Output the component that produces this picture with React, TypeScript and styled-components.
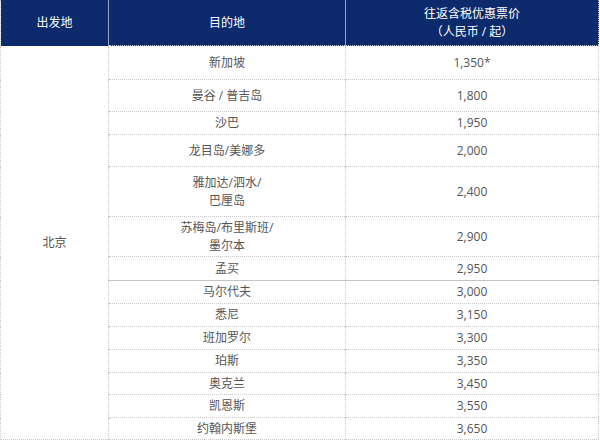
import { createGlobalStyle } from "styled-components";
import styled from "styled-components";

const GlobalStyle = createGlobalStyle`
  html, body {
    margin: 0;
    padding: 0;
    background: #fff;
  }
  body {
    font-family: "Open Sans", "Noto Sans CJK SC", sans-serif;
  }
`;

const rows = [
  { dest: ["新加坡"], price: "1,350*", h: 34 },
  { dest: ["曼谷 / 普吉岛"], price: "1,800", h: 32 },
  { dest: ["沙巴"], price: "1,950", h: 23 },
  { dest: ["龙目岛/美娜多"], price: "2,000", h: 32 },
  { dest: ["雅加达/泗水/", "巴厘岛"], price: "2,400", h: 50 },
  { dest: ["苏梅岛/布里斯班/", "墨尔本"], price: "2,900", h: 40 },
  { dest: ["孟买"], price: "2,950", h: 24 },
  { dest: ["马尔代夫"], price: "3,000", h: 23, solid: true },
  { dest: ["悉尼"], price: "3,150", h: 23 },
  { dest: ["班加罗尔"], price: "3,300", h: 23 },
  { dest: ["珀斯"], price: "3,350", h: 23 },
  { dest: ["奥克兰"], price: "3,450", h: 22 },
  { dest: ["凯恩斯"], price: "3,550", h: 23 },
  { dest: ["约翰内斯堡"], price: "3,650", h: 22 },
];

export default function App() {
  return (
    <>
      <GlobalStyle />
      <FareTable>
        <colgroup>
          <col style={{ width: 108 }} />
          <col style={{ width: 237 }} />
          <col style={{ width: 253 }} />
        </colgroup>
        <thead>
          <tr>
            <HeadCell>出发地</HeadCell>
            <HeadCell>目的地</HeadCell>
            <HeadCell>
              往返含税优惠票价
              <br />
              （人民币 / 起）
            </HeadCell>
          </tr>
        </thead>
        <tbody>
          {rows.map((row, i) => (
            <Row key={row.price} $h={row.h}>
              {i === 0 && <OriginCell rowSpan={rows.length}>北京</OriginCell>}
              <Cell $solid={row.solid}>
                {row.dest.map((line, j) => (
                  <Line key={j}>{line}</Line>
                ))}
              </Cell>
              <Cell $solid={row.solid}>{row.price}</Cell>
            </Row>
          ))}
        </tbody>
      </FareTable>
    </>
  );
}

const FareTable = styled.table`
  width: 598px;
  border-collapse: collapse;
  table-layout: fixed;
  font-size: 12px;
  color: #555;
  border-left: 1px dotted #c8c8c8;
  border-right: 1px dotted #c8c8c8;
  border-bottom: 1px dotted #c8c8c8;
`;

const HeadCell = styled.th`
  height: 45px;
  padding: 0;
  background: #0c2a6c;
  color: #fff;
  font-weight: normal;
  line-height: 18px;
  text-align: center;
  vertical-align: middle;
  border-left: 1px solid #9aa3bd;
  &:first-child {
    border-left: none;
  }
`;

const Row = styled.tr<{ $h: number }>`
  height: ${(p) => p.$h}px;
`;

const Cell = styled.td<{ $solid?: boolean }>`
  padding: 0;
  text-align: center;
  vertical-align: middle;
  line-height: 18px;
  border-top: 1px ${(p) => (p.$solid ? "solid #c4c4c4" : "dotted #c8c8c8")};
  border-left: 1px dotted #c8c8c8;
`;

const OriginCell = styled.td`
  padding: 0;
  text-align: center;
  vertical-align: middle;
  border-left: 1px dotted #c8c8c8;
`;

const Line = styled.div`
  white-space: nowrap;
`;
